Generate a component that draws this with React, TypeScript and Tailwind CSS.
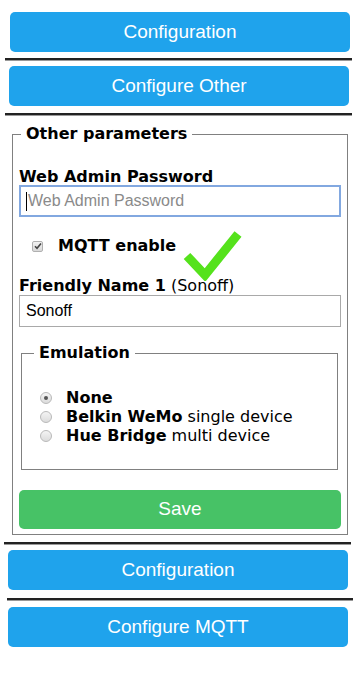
import React from 'react';

const btnFont = { fontFamily: '"Liberation Sans", Arial, sans-serif' };
const verdana = { fontFamily: '"DejaVu Sans", Verdana, sans-serif' };

const BlueButton = ({ label, className }: { label: string; className: string }) => {
    return (
        <button
            className={`h-[40px] w-[340px] rounded-[5px] bg-[#1fa3ec] text-[19px] leading-[40px] text-white ${className}`}
            style={btnFont}
        >
            {label}
        </button>
    );
};

const Divider = ({ className }: { className: string }) => {
    return <div className={`h-[3px] border-t-2 border-b border-t-[#222] border-b-[#999] ${className}`} />;
};

const Radio = ({ checked }: { checked?: boolean }) => {
    return (
        <span className="flex h-[12px] w-[12px] items-center justify-center rounded-full border border-[#b9b9b9] bg-gradient-to-b from-[#f4f4f4] to-[#dcdcdc]">
            {checked && <span className="h-[4px] w-[4px] rounded-full bg-[#555]" />}
        </span>
    );
};

const App = () => {
    return (
        <div className="relative h-[700px] w-[360px] overflow-hidden bg-white">
            <div className="flex flex-col">
                <BlueButton label="Configuration" className="ml-[10px] mt-[12px]" />
                <Divider className="ml-[5px] mt-[6px] w-[347px]" />
                <BlueButton label="Configure Other" className="ml-[9px] mt-[5px]" />
                <Divider className="ml-[5px] mt-[7px] w-[347px]" />

                <fieldset className="ml-[12px] mt-[8px] w-[336px] border border-[#808080] px-[6px] pb-[5px]">
                    <legend className="ml-[2px] px-[5px] text-[16px] font-bold leading-[20px] text-black" style={verdana}>
                        Other parameters
                    </legend>

                    <div className="mt-[23px] text-[16px] font-bold leading-[19px] text-black" style={verdana}>
                        Web Admin Password
                    </div>
                    <div
                        className="mt-[-1px] flex h-[32px] w-[322px] items-center border-2 border-[#82a8e0] px-[5px] text-[16px] text-[#8a8a8a]"
                        style={btnFont}
                    >
                        <span className="mr-[1px] h-[19px] w-[1px] bg-black" />
                        Web Admin Password
                    </div>

                    <div className="mt-[19px] flex items-center">
                        <span className="ml-[13px] flex h-[11px] w-[11px] items-center justify-center rounded-[2px] border border-[#b0b0b0] bg-gradient-to-b from-[#f2f2f2] to-[#d8d8d8]">
                            <svg width="8" height="8" viewBox="0 0 8 8">
                                <path d="M1 4.2 L3 6.2 L7 1.5" fill="none" stroke="#444" strokeWidth="1.6" />
                            </svg>
                        </span>
                        <span className="ml-[15px] text-[16px] font-bold leading-[20px] text-black" style={verdana}>
                            MQTT enable
                        </span>
                    </div>

                    <div className="mt-[20px] text-[16px] leading-[19px] text-black" style={verdana}>
                        <span className="font-bold">Friendly Name 1</span> (Sonoff)
                    </div>
                    <div
                        className="flex h-[32px] w-[322px] items-center border border-[#a9a9a9] px-[6px] text-[16px] text-black"
                        style={btnFont}
                    >
                        Sonoff
                    </div>

                    <fieldset className="ml-[2px] mt-[16px] h-[127px] w-[317px] border border-[#808080] px-[18px]">
                        <legend className="ml-[-6px] px-[5px] text-[16px] font-bold leading-[20px] text-black" style={verdana}>
                            Emulation
                        </legend>
                        <div className="mt-[25px] flex flex-col text-[16px] leading-[19px] text-black" style={verdana}>
                            <div className="flex items-center">
                                <Radio checked />
                                <span className="ml-[14px] font-bold">None</span>
                            </div>
                            <div className="flex items-center">
                                <Radio />
                                <span className="ml-[14px]">
                                    <span className="font-bold">Belkin WeMo</span> single device
                                </span>
                            </div>
                            <div className="flex items-center">
                                <Radio />
                                <span className="ml-[14px]">
                                    <span className="font-bold">Hue Bridge</span> multi device
                                </span>
                            </div>
                        </div>
                    </fieldset>

                    <button
                        className="mt-[20px] h-[39px] w-[322px] rounded-[5px] bg-[#47c266] text-[19px] text-white"
                        style={btnFont}
                    >
                        Save
                    </button>
                </fieldset>

                <Divider className="ml-[4px] mt-[7px] w-[347px]" />
                <BlueButton label="Configuration" className="ml-[8px] mt-[5px]" />
                <Divider className="ml-[7px] mt-[8px] w-[346px]" />
                <BlueButton label="Configure MQTT" className="ml-[8px] mt-[6px]" />
            </div>

            <svg className="absolute left-[183px] top-[227px]" width="60" height="54" viewBox="0 0 60 54">
                <path d="M4 29 L22 48 L55 7" fill="none" stroke="#55e21c" strokeWidth="9" />
            </svg>
        </div>
    );
};

export default App;
